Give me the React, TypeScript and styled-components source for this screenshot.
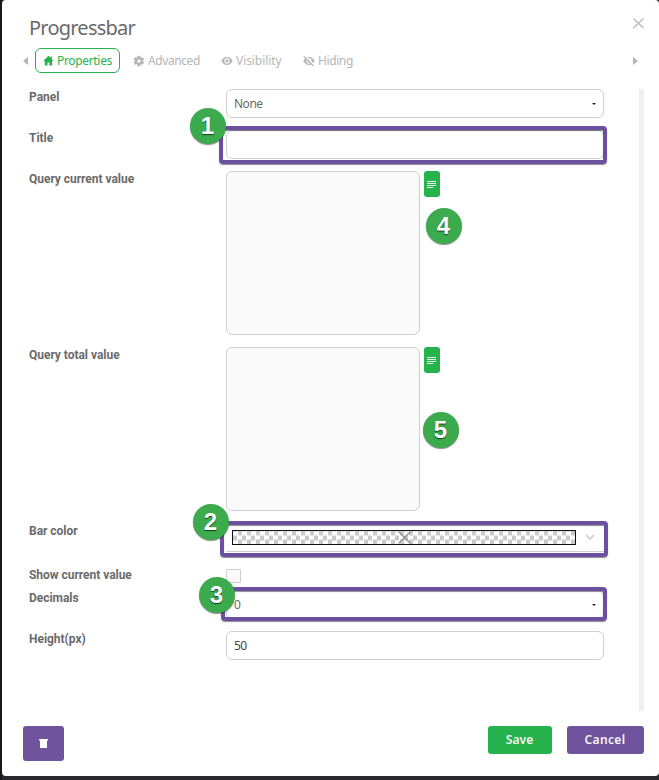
import React from "react";
import styled, { createGlobalStyle } from "styled-components";

const GREEN = "#26b34d";
const PURPLE = "#6f549d";
const BORDER = "#cfcfcf";

const GlobalStyle = createGlobalStyle`
  * { box-sizing: border-box; }
  body {
    margin: 0;
    overflow: hidden;
    background: #29282b;
    font-family: "Noto Sans", "Open Sans", sans-serif;
    font-size: 12px;
    color: #6a6a6a;
  }
  button, input, select { font-family: inherit; }
`;

const Page = styled.div`
  position: relative;
  width: 659px;
  height: 780px;
  padding: 0 0 4px 2px;
  background: linear-gradient(90deg, #19191b 2px, #29282b 2px);
`;

const Dialog = styled.section`
  display: flex;
  flex-direction: column;
  height: 776px;
  background: #fff;
  border-radius: 4px;
`;

const Header = styled.header`
  display: flex;
  justify-content: space-between;
  height: 48px;
  padding: 14px 14px 0 27px;
`;

const Title = styled.h1`
  margin: 0;
  font-size: 20px;
  line-height: 28px;
  font-weight: 400;
  letter-spacing: -0.77px;
`;

const CloseButton = styled.button`
  width: 13px;
  height: 13px;
  margin-top: 3px;
  padding: 0;
  border: 0;
  background: none;
  svg { display: block; }
`;

const TabBar = styled.nav`
  display: flex;
  align-items: center;
  height: 25px;
  padding: 0 21px 0 21px;
`;

const Arrow = styled.span<{ $right?: boolean }>`
  width: 5px;
  height: 8px;
  margin-left: ${p => (p.$right ? "auto" : "0")};
  margin-top: 1px;
  background: #b4b4b4;
  clip-path: ${p => (p.$right ? "polygon(0 0, 100% 50%, 0 100%)" : "polygon(100% 0, 0 50%, 100% 100%)")};
`;

const Tab = styled.button<{ $active?: boolean; $width: number; $spacing: number }>`
  display: flex;
  align-items: center;
  gap: 3px;
  width: ${p => p.$width}px;
  height: 25px;
  padding: 0 0 0 6px;
  border: 1px solid ${p => (p.$active ? GREEN : "transparent")};
  border-radius: 6px;
  background: none;
  color: ${p => (p.$active ? GREEN : "#b6b6b6")};
  font-size: 12px;
  letter-spacing: ${p => p.$spacing}px;
  white-space: nowrap;
  svg { flex: none; width: 12px; height: 12px; fill: currentColor; }
`;

const Tabs = styled.div`
  display: flex;
  gap: 6px;
  margin-left: 7px;
`;

const Body = styled.div`
  display: flex;
  justify-content: space-between;
  height: 622px;
  margin: 16px 15px 0 27px;
`;

const Form = styled.div`
  width: 575px;
`;

const ScrollTrack = styled.div`
  width: 5px;
  background: #f0f0f0;
`;

const FormRow = styled.div<{ $height: number }>`
  display: flex;
  align-items: flex-start;
  height: ${p => p.$height}px;
`;

const Label = styled.label`
  width: 197px;
  font-family: Roboto, sans-serif;
  font-weight: 700;
  font-size: 12px;
  line-height: 16px;
  letter-spacing: -0.03px;
`;

const fieldBox = `
  width: 378px;
  height: 29px;
  border: 1px solid ${BORDER};
  border-radius: 6px;
  background: #fff;
`;

const SelectBox = styled.div`
  ${fieldBox}
  display: flex;
  align-items: center;
  justify-content: space-between;
  padding: 0 7px 0 7px;
  line-height: 27px;
  letter-spacing: -0.5px;
`;

const Caret = styled.span`
  width: 4px;
  height: 2px;
  background: #222;
  clip-path: polygon(0 0, 100% 0, 75% 100%, 25% 100%);
`;

const TextInput = styled.input`
  ${fieldBox}
  padding: 0 7px;
  color: #444;
  font-size: 12px;
  letter-spacing: -0.6px;
  outline: 0;
`;

const QueryArea = styled.div`
  width: 194px;
  height: 164px;
  border: 1px solid ${BORDER};
  border-radius: 6px;
  background: #fafafa;
`;

const QueryButton = styled.button`
  display: flex;
  align-items: center;
  justify-content: center;
  width: 16px;
  height: 26px;
  margin-left: 4px;
  padding: 0;
  border: 0;
  border-radius: 3px;
  background: ${GREEN};
`;

const ColorBox = styled.div`
  display: flex;
  align-items: flex-start;
  width: 378px;
  height: 29px;
  padding: 7px 9px 0 6px;
  border-bottom: 1px solid ${BORDER};
`;

const Swatch = styled.div`
  display: flex;
  justify-content: center;
  width: 344px;
  height: 15px;
  border: 1px solid #111;
  background: repeating-conic-gradient(#fff 0 25%, #cacaca 0 50%) 0 -4.5px / 9px 9px;
`;

const ColorArrow = styled.svg`
  width: 10px;
  height: 6px;
  margin: 4px 0 0 9px;
`;

const Checkbox = styled.div`
  width: 15px;
  height: 14px;
  margin-top: 2px;
  border: 1px solid ${BORDER};
  border-radius: 1px;
  background: #fafafa;
`;

const Footer = styled.footer`
  display: flex;
  align-items: flex-start;
  padding: 15px 15px 0 21px;
`;

const Button = styled.button<{ $color: string; $width: number; $spacing?: number }>`
  width: ${p => p.$width}px;
  height: 28px;
  padding: 0 1px 0 0;
  border: 0;
  border-radius: 3px;
  background: ${p => p.$color};
  color: #f4f4f6;
  font-size: 12px;
  font-weight: 600;
  line-height: 28px;
  letter-spacing: ${p => p.$spacing ?? 0}px;
`;

const DeleteButton = styled(Button)`
  display: flex;
  align-items: center;
  justify-content: center;
  height: 35px;
  padding: 0;
`;

const FooterActions = styled.div`
  display: flex;
  gap: 15px;
  margin-left: auto;
`;

/* Tutorial annotations floating over the form */
const Highlight = styled.div<{ $x: number; $y: number; $w: number; $h: number }>`
  position: absolute;
  left: ${p => p.$x}px;
  top: ${p => p.$y}px;
  width: ${p => p.$w}px;
  height: ${p => p.$h}px;
  border: 4px solid #6c50a0;
  border-radius: 4px;
  box-shadow: 0 1px 1px rgba(0, 0, 0, 0.45), inset 0 1px 1px rgba(0, 0, 0, 0.45);
  pointer-events: none;
`;

const Badge = styled.div<{ $x: number; $y: number }>`
  position: absolute;
  left: ${p => p.$x - 18}px;
  top: ${p => p.$y - 18}px;
  width: 36px;
  height: 36px;
  padding-right: 1px;
  border-radius: 50%;
  background: #3cab4e;
  box-shadow: 0 1px 1px rgba(0, 0, 0, 0.45);
  color: #fff;
  font: 700 24px/36px "Liberation Sans", Arial, sans-serif;
  text-align: center;
  text-shadow: 0 1px 1px rgba(0, 0, 0, 0.65);
`;

const HomeIcon = () => (
  <svg viewBox="-1 0 13 13"><path d="M6 .8.4 6.500H2v5h3V8h2v3.500h3v-5h1.600L9.700 4.500V1.600H8.200V3z" /></svg>
);
const GearIcon = () => (
  <svg viewBox="0 0 24 24"><path d="M19.4 13c.1-.6.1-1.4 0-2l2.2-1.7c.2-.2.2-.4.1-.6l-2.1-3.6c-.1-.2-.4-.3-.6-.2l-2.5 1c-.5-.4-1.1-.7-1.7-1L14.400 2.300c0-.2-.2-.4-.5-.4H9.700c-.3 0-.5.2-.5.4l-.4 2.600c-.6.3-1.200.6-1.700 1l-2.500-1c-.2-.1-.5 0-.6.2L1.900 8.700c-.1.200-.1.500.1.600L4.200 11c-.1.600-.1 1.400 0 2L2 14.700c-.2.200-.2.400-.1.600L4 18.900c.1.200.4.300.6.200l2.500-1c.5.4 1.100.7 1.700 1l.4 2.600c0 .2.200.4.500.4h4.200c.3 0 .5-.2.500-.4l.4-2.600c.6-.3 1.200-.6 1.700-1l2.500 1c.2.100.5 0 .6-.2l2.100-3.600c.1-.2.100-.5-.1-.6zM11.800 15.700a3.700 3.700 0 1 1 0-7.400 3.700 3.700 0 0 1 0 7.400z" fillRule="evenodd" stroke="currentColor" strokeWidth=".8" /></svg>
);
const EyeIcon = ({ off }: { off?: boolean }) => (
  <svg viewBox="0 0 24 24">
    <path fillRule="evenodd" d="M12 4C6.500 4 2.500 7.500.7 12c1.800 4.500 5.800 8 11.300 8s9.500-3.500 11.300-8C21.500 7.500 17.500 4 12 4zm0 13.300a5.300 5.300 0 1 1 0-10.600 5.300 5.300 0 0 1 0 10.600zm0-2.100a3.200 3.200 0 1 0 0-6.400 3.200 3.200 0 0 0 0 6.400z" />
    {off && <><path d="M3 1 23 21" stroke="#fff" strokeWidth="3" /><path d="M1.500 2.500 21 22" stroke="currentColor" strokeWidth="2.200" /></>}
  </svg>
);
const LinesIcon = () => (
  <svg width="10" height="8" viewBox="0 0 10 8" shapeRendering="crispEdges">
    <path d="M0 1.500h9M0 3.500h9M0 5.500h9M0 7.500h6" stroke="#e5f7e9" strokeWidth="1" />
  </svg>
);

export default function App() {
  return (
    <Page>
      <GlobalStyle />
      <Dialog>
        <Header>
          <Title>Progressbar</Title>
          <CloseButton aria-label="Close">
            <svg width="13" height="13" viewBox="0 0 13 13"><path d="M1.500 1.500 11.300 11M11.300 1.500 1.500 11" stroke="#bababa" strokeWidth="1.300" /></svg>
          </CloseButton>
        </Header>
        <TabBar>
          <Arrow />
          <Tabs>
            <Tab $active $width={85} $spacing={-0.33}><HomeIcon />Properties</Tab>
            <Tab $width={82} $spacing={-0.42}><GearIcon />Advanced</Tab>
            <Tab $width={76} $spacing={-0.07}><EyeIcon />Visibility</Tab>
            <Tab $width={76} $spacing={-0.4}><EyeIcon off />Hiding</Tab>
          </Tabs>
          <Arrow $right />
        </TabBar>
        <Body>
          <Form>
            <FormRow $height={41}>
              <Label>Panel</Label>
              <SelectBox>None<Caret /></SelectBox>
            </FormRow>
            <FormRow $height={41}>
              <Label>Title</Label>
              <TextInput />
            </FormRow>
            <FormRow $height={176}>
              <Label>Query current value</Label>
              <QueryArea />
              <QueryButton><LinesIcon /></QueryButton>
            </FormRow>
            <FormRow $height={176}>
              <Label>Query total value</Label>
              <QueryArea />
              <QueryButton><LinesIcon /></QueryButton>
            </FormRow>
            <FormRow $height={44}>
              <Label>Bar color</Label>
              <ColorBox>
                <Swatch>
                  <svg width="13" height="13" viewBox="0 0 13 13"><path d="M.5.5 12.500 12.500M12.500.5.5 12.500" stroke="#8d8d8d" strokeWidth="1.200" /></svg>
                </Swatch>
                <ColorArrow viewBox="0 0 10 6"><path d="m1 1 4 4 4-4" fill="none" stroke="#cacaca" strokeWidth="1.500" /></ColorArrow>
              </ColorBox>
            </FormRow>
            <FormRow $height={23}>
              <Label>Show current value</Label>
              <Checkbox />
            </FormRow>
            <FormRow $height={41}>
              <Label>Decimals</Label>
              <SelectBox>0<Caret /></SelectBox>
            </FormRow>
            <FormRow $height={41}>
              <Label>Height(px)</Label>
              <TextInput defaultValue="50" />
            </FormRow>
          </Form>
          <ScrollTrack />
        </Body>
        <Footer>
          <DeleteButton $color={PURPLE} $width={41} aria-label="Delete">
            <svg width="9" height="9" viewBox="0 0 9 9"><path d="M0 0h9v1.500H8V9H1V1.500H0z" fill="#fff" /></svg>
          </DeleteButton>
          <FooterActions>
            <Button $color={GREEN} $width={64} $spacing={0.1}>Save</Button>
            <Button $color={PURPLE} $width={77} $spacing={0.4}>Cancel</Button>
          </FooterActions>
        </Footer>
      </Dialog>
      <Highlight $x={219} $y={126} $w={387.5} $h={38} />
      <Highlight $x={220} $y={521} $w={387.5} $h={36} />
      <Highlight $x={221} $y={587} $w={385.5} $h={34} />
      <Badge $x={208} $y={126}>1</Badge>
      <Badge $x={211} $y={522}>2</Badge>
      <Badge $x={217} $y={595}>3</Badge>
      <Badge $x={444} $y={226}>4</Badge>
      <Badge $x={441} $y={430}>5</Badge>
    </Page>
  );
}
